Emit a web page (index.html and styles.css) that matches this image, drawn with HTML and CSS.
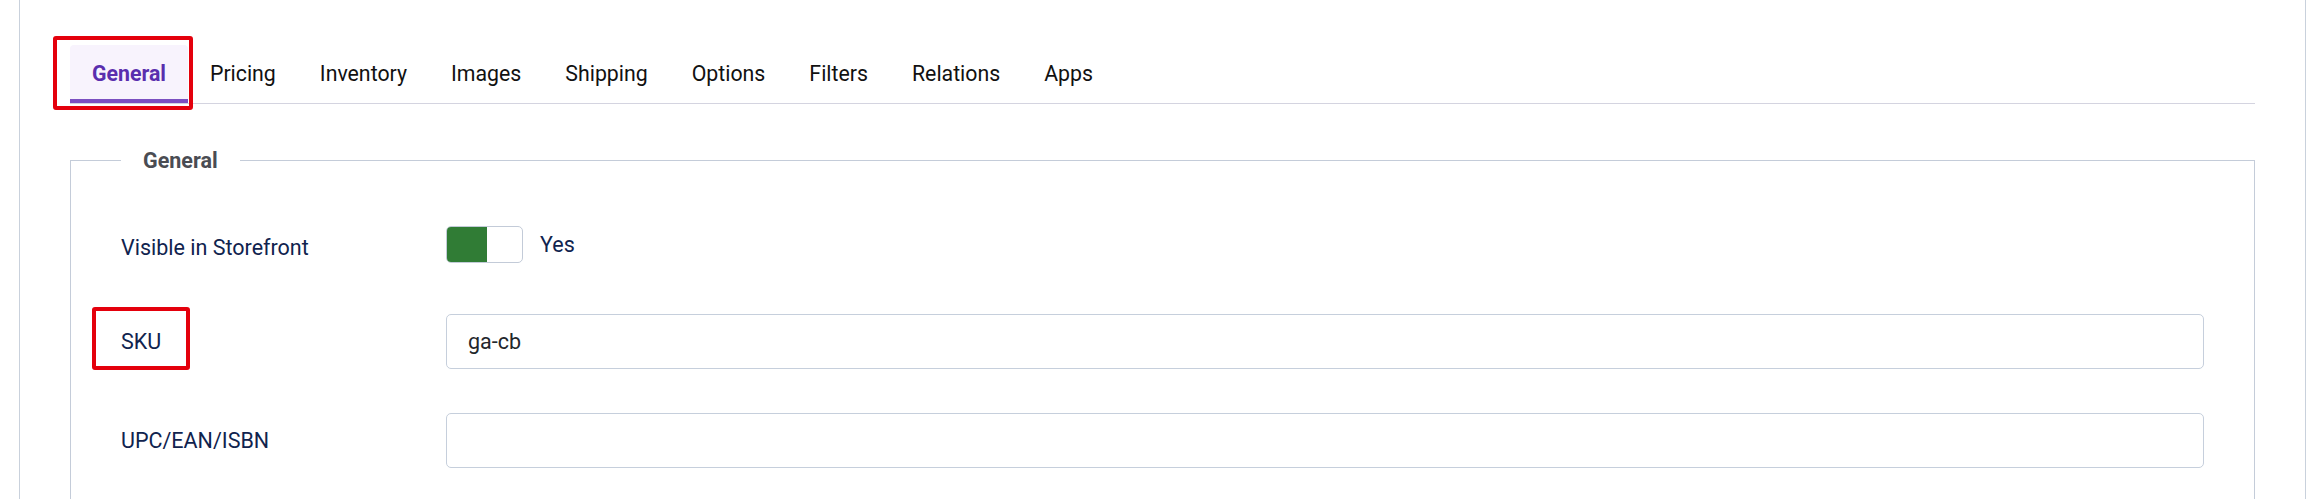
FILE: index.html
```html
<!DOCTYPE html>
<html lang="en">
<head>
<meta charset="utf-8">
<title>Product - General</title>
<link rel="stylesheet" href="styles.css">
</head>
<body>
<div class="card">
  <nav class="tabs">
    <a class="tab active" href="#general">General</a>
    <a class="tab" href="#pricing">Pricing</a>
    <a class="tab" href="#inventory">Inventory</a>
    <a class="tab" href="#images">Images</a>
    <a class="tab" href="#shipping">Shipping</a>
    <a class="tab" href="#options">Options</a>
    <a class="tab" href="#filters">Filters</a>
    <a class="tab" href="#relations">Relations</a>
    <a class="tab" href="#apps">Apps</a>
  </nav>

  <fieldset class="group">
    <legend>General</legend>

    <div class="row row-switch">
      <label class="row-label">Visible in Storefront</label>
      <div class="switch-wrap">
        <span class="switch"><span class="switch-on"></span></span>
        <span class="switch-text">Yes</span>
      </div>
    </div>

    <div class="row">
      <label class="row-label" for="sku">SKU</label>
      <input class="field" id="sku" type="text" value="ga-cb">
    </div>

    <div class="row">
      <label class="row-label" for="upc">UPC/EAN/ISBN</label>
      <input class="field" id="upc" type="text" value="">
    </div>
  </fieldset>

  <span class="mark mark-tab"></span>
  <span class="mark mark-sku"></span>
</div>
</body>
</html>
```

FILE: styles.css
```css
* {
  box-sizing: border-box;
}

html, body {
  margin: 0;
  background: #ffffff;
}

body {
  font-family: Roboto, "Liberation Sans", Arial, sans-serif;
  font-size: 21.5px;
  overflow: hidden;
}

.card {
  position: relative;
  margin-left: 19px;
  width: 2287px;
  min-height: 499px;
  padding: 45px 50px 0;
  border-left: 1px solid #c9d1dc;
  border-right: 1px solid #c9d1dc;
}

/* tab strip */
.tabs {
  display: flex;
  border-bottom: 1px solid #d4d4e0;
}

.tab {
  display: block;
  padding: 17px 22px 13px;
  font-size: 21.3px;
  line-height: 24px;
  color: #111111;
  text-decoration: none;
  border-bottom: 4px solid transparent;
}

.tab.active {
  background: #f8f3fd;
  color: #5a2eae;
  font-weight: 700;
  border-bottom-color: #7b4fc1;
  border-radius: 4px 4px 0 0;
}

/* fieldset group */
.group {
  margin: 41px 0 0;
  padding: 45px 50px 0;
  border: 1px solid #c4ccd9;
  border-bottom: none;
  min-width: 0;
}

.group legend {
  padding: 0 22px;
  line-height: 30px;
  font-weight: 700;
  color: #4a4c53;
  position: relative;
  top: 1px;
}

.row {
  display: grid;
  grid-template-columns: 325px 1fr;
  align-items: center;
  height: 55px;
  margin-bottom: 44px;
}

.row-switch {
  margin-bottom: 39px;
}

.row-label {
  color: #10234e;
}

.switch-wrap {
  display: flex;
  align-items: center;
  gap: 17px;
  align-self: start;
  margin-top: 6px;
}

.switch {
  display: block;
  width: 77px;
  height: 37px;
  border: 1px solid #c3cbd8;
  border-radius: 5px;
  overflow: hidden;
  background: #ffffff;
}

.switch-on {
  display: block;
  width: 40px;
  height: 100%;
  background: #307c35;
}

.switch-text {
  color: #10234e;
  margin-top: -1px;
}

.field {
  width: 100%;
  height: 55px;
  padding: 0 21px;
  border: 1px solid #c6cfdc;
  border-radius: 5px;
  font: inherit;
  color: #23262b;
  background: #ffffff;
  outline: none;
}

/* red highlight frames laid over the form */
.mark {
  position: absolute;
  border: 4px solid #e4000c;
  border-radius: 3px;
  pointer-events: none;
}

.mark-tab {
  left: 33px;
  top: 36px;
  width: 140px;
  height: 74px;
}

.mark-sku {
  left: 72px;
  top: 307px;
  width: 98px;
  height: 63px;
}
```
